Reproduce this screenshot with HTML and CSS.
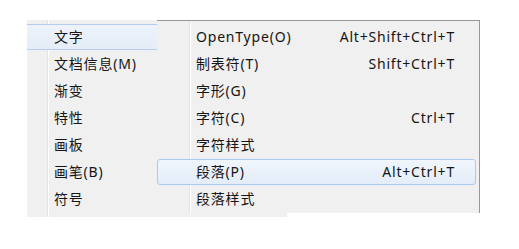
FILE: index.html
```html
<!DOCTYPE html>
<html>
<head>
<meta charset="utf-8">
<link rel="stylesheet" href="styles.css">
</head>
<body>
<div class="stage">
  <div class="menu main">
    <div class="gutter"></div>
    <div class="item open"><span class="label">文字</span></div>
    <div class="item"><span class="label">文档信息(M)</span></div>
    <div class="item"><span class="label">渐变</span></div>
    <div class="item"><span class="label">特性</span></div>
    <div class="item"><span class="label">画板</span></div>
    <div class="item"><span class="label">画笔(B)</span></div>
    <div class="item"><span class="label">符号</span></div>
  </div>
  <div class="menu sub">
    <div class="gutter"></div>
    <div class="item"><span class="label">OpenType(O)</span><span class="key">Alt+Shift+Ctrl+T</span></div>
    <div class="item"><span class="label">制表符(T)</span><span class="key">Shift+Ctrl+T</span></div>
    <div class="item"><span class="label">字形(G)</span><span class="key"></span></div>
    <div class="item"><span class="label">字符(C)</span><span class="key">Ctrl+T</span></div>
    <div class="item"><span class="label">字符样式</span><span class="key"></span></div>
    <div class="item hover"><span class="label">段落(P)</span><span class="key">Alt+Ctrl+T</span></div>
    <div class="item"><span class="label">段落样式</span><span class="key"></span></div>
  </div>
</div>
</body>
</html>
```
FILE: styles.css
```css
html, body {
  margin: 0;
  padding: 0;
  background: #ffffff;
}
body {
  font-family: "Noto Sans", "Noto Sans CJK SC", sans-serif;
  font-size: 14px;
  letter-spacing: 0.8px;
  color: #151515;
}
.stage {
  position: relative;
  width: 519px;
  height: 249px;
  padding: 20px 0 0 27px;
  box-sizing: border-box;
}
.menu {
  background: #f0f0f0;
  box-sizing: border-box;
  display: flex;
  flex-direction: column;
}
.main {
  width: 260px;
  height: 197px;
  padding: 4px 0 4px 0;
  position: relative;
}
.gutter {
  position: absolute;
  top: 0;
  bottom: 0;
  width: 1px;
  background: #e2e3e3;
  border-right: 1px solid #ffffff;
}
.main .gutter { left: 20px; }
.item {
  position: relative;
  height: 26px;
  margin-bottom: 1px;
  display: flex;
  align-items: center;
  box-sizing: border-box;
  line-height: 26px;
  white-space: nowrap;
}
.main .item { padding-left: 27px; }
.main .item.open {
  background: linear-gradient(#eef3fa, #e4ecf7);
  border-top: 1px solid #b4cdf0;
  border-bottom: 1px solid #b4cdf0;
}
.sub {
  position: absolute;
  left: 157px;
  top: 20px;
  width: 323px;
  height: 193px;
  border-top: 1px solid #979797;
  border-right: 1px solid #979797;
  padding: 3px 3px 0 0;
}
.sub .gutter { left: 32px; }
.sub .item {
  padding-left: 39px;
  padding-right: 21px;
  justify-content: space-between;
}
.sub .item.hover {
  background: linear-gradient(#f1f6fc, #e3ecf8);
  border: 1px solid #a9c9f3;
  border-radius: 3px;
  padding-left: 38px;
  padding-right: 20px;
}
.key { text-align: right; }
```
